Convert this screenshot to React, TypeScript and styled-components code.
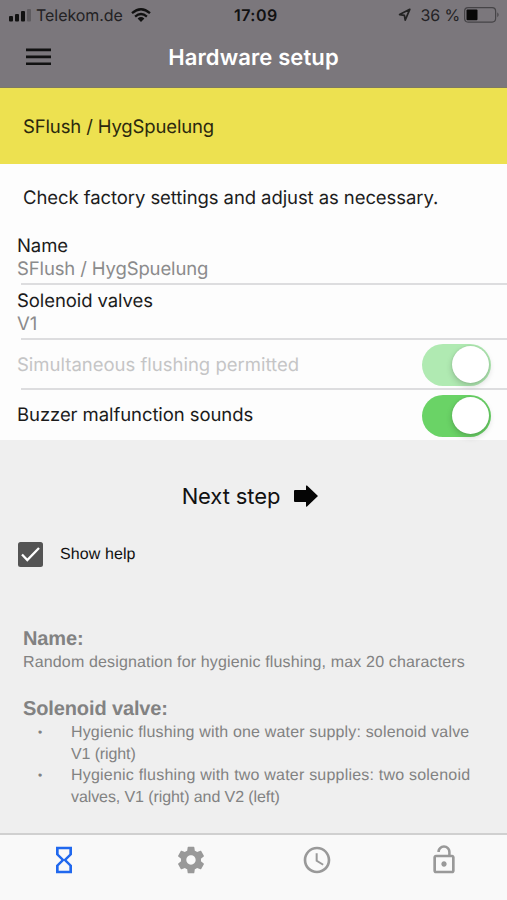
import React from "react";
import styled, { createGlobalStyle } from "styled-components";

const GlobalStyle = createGlobalStyle`
  * { box-sizing: border-box; }
  body { margin: 0; background: #efefef; text-rendering: geometricPrecision; }
  h1, h2, p, ul { margin: 0; padding: 0; }
`;

const Screen = styled.div`
  display: flex;
  flex-direction: column;
  width: 507px;
  height: 900px;
  overflow: hidden;
  background: #efefef;
  font-family: Inter, "Liberation Sans", sans-serif;
  color: #1c1c1c;
  white-space: nowrap;
`;

const Header = styled.header`
  flex: none;
  height: 88px;
  background: #7b777c;
  border-bottom: 1px solid #7d7963;
`;

const StatusBar = styled.div`
  display: grid;
  grid-template-columns: 225px 1fr auto;
  align-items: center;
  height: 30px;
  padding: 0 7px 0 9px;
  font-size: 16px;
  color: #232224;
`;

const StatusGroup = styled.div<{ $end?: boolean }>`
  display: flex;
  align-items: center;
  justify-content: ${(p) => (p.$end ? "flex-end" : "flex-start")};
`;

const Carrier = styled.span`
  margin: 0 8px 0 4px;
  font-size: 16px;
  letter-spacing: -0.05px;
`;

const Clock = styled.span`
  font-size: 16px;
  font-weight: 600;
  letter-spacing: 0.45px;
  color: #111;
`;

const Charge = styled.span`
  margin: 0 4px 0 9px;
  letter-spacing: -0.1px;
`;

const TitleBar = styled.div`
  display: grid;
  grid-template-columns: 64px 1fr 64px;
  align-items: center;
  height: 55px;
`;

const MenuButton = styled.button`
  display: flex;
  padding: 0 0 1px 26px;
  border: 0;
  background: none;
`;

const Title = styled.h1`
  padding-top: 1px;
  text-align: center;
  font-size: 22px;
  line-height: 28px;
  font-weight: 600;
  letter-spacing: 0.12px;
  color: #fff;
`;

const Banner = styled.div`
  flex: none;
  display: flex;
  align-items: center;
  height: 76px;
  padding: 1px 0 0 23px;
  background: #ede150;
  font-size: 18.5px;
  letter-spacing: -0.14px;
  color: #2b280e;
`;

const Settings = styled.section`
  flex: none;
  height: 276px;
  background: #fdfdfd;
`;

const Intro = styled.p`
  height: 68px;
  padding: 22px 0 0 23px;
  font-size: 18.5px;
  line-height: 24px;
  letter-spacing: -0.08px;
`;

const Row = styled.div<{ $height: number; $last?: boolean }>`
  display: flex;
  align-items: center;
  justify-content: space-between;
  height: ${(p) => p.$height}px;
  padding: 0 16px 0 17px;
  background: ${(p) =>
    p.$last ? "none" : "linear-gradient(#dddddf, #dddddf) 21px 100% / 100% 2px no-repeat"};
`;

const Field = styled.div<{ $raise?: number }>`
  display: flex;
  flex-direction: column;
  padding-bottom: ${(p) => p.$raise ?? 0}px;
`;

const Label = styled.span<{ $disabled?: boolean }>`
  font-size: 18.5px;
  line-height: 23px;
  letter-spacing: ${(p) => (p.$disabled ? 0 : -0.08)}px;
  color: ${(p) => (p.$disabled ? "#c5c5c6" : "#1b1b1b")};
`;

const Value = styled.span`
  font-size: 18.5px;
  line-height: 23px;
  letter-spacing: -0.13px;
  color: #8b8b8c;
`;

const Toggle = styled.button<{ $disabled?: boolean }>`
  display: flex;
  justify-content: flex-end;
  width: 69px;
  height: 42px;
  padding: 2px 2.5px;
  border: 0;
  border-radius: 21px;
  background: ${(p) => (p.$disabled ? "#b0eab2" : "#6ad366")};
`;

const Knob = styled.span`
  width: 37px;
  height: 37px;
  border-radius: 50%;
  background: #fff;
  box-shadow: 0 3px 6px rgba(0, 0, 0, 0.18), 0 0 2px rgba(0, 0, 0, 0.12);
`;

const NextStep = styled.button`
  flex: none;
  display: flex;
  align-items: center;
  justify-content: center;
  gap: 14px;
  height: 44px;
  margin-top: 34px;
  padding: 0 7px 0 0;
  border: 0;
  background: none;
  font: 22px Inter, sans-serif;
  letter-spacing: -0.1px;
  color: #111;
`;

const HelpToggle = styled.label`
  flex: none;
  display: flex;
  align-items: center;
  gap: 17px;
  height: 26px;
  margin: 23px 0 0 18px;
  padding-top: 1px;
  font: 16px "Liberation Sans", sans-serif;
  letter-spacing: 0.1px;
  color: #111;
`;

const HelpText = styled.section`
  flex: 1;
  padding: 59px 0 0 23px;
  font: 16px/22px "Liberation Sans", sans-serif;
  letter-spacing: 0.15px;
  color: #828282;
`;

const HelpHeading = styled.h2`
  font-size: 20px;
  line-height: 26px;
  font-weight: 700;
  letter-spacing: -0.12px;
`;

const HelpLine = styled.p`
  height: 44px;
  line-height: 22px;
`;

const BulletList = styled.ul`
  list-style: none;
  line-height: 21.6px;
`;

const Bullet = styled.li`
  display: grid;
  grid-template-columns: 48px 1fr;

  &::before {
    content: "•";
    padding-left: 15px;
    font-size: 12px;
  }
`;

const BulletLine = styled.span<{ $spacing: number }>`
  display: block;
  letter-spacing: ${(p) => p.$spacing}px;
`;

const TabBar = styled.nav`
  flex: none;
  display: flex;
  height: 67px;
  padding-left: 1px;
  border-top: 2px solid #d0d0d0;
  background: #f9f9f9;
`;

const Tab = styled.button<{ $active?: boolean }>`
  flex: 1;
  display: flex;
  justify-content: center;
  padding: 9px 0 0;
  border: 0;
  background: none;
  color: ${(p) => (p.$active ? "#2068ee" : "#999")};
`;

const tabs = [
  {
    name: "Flushing",
    path: "M6 2v6h.01L6 8.01 10 12l-4 4 .01.01H6V22h12v-5.99h-.01L18 16l-4-4 4-3.99-.01-.01H18V2H6zm10 14.5V20H8v-3.5l4-4 4 4zm-4-5l-4-4V4h8v3.5l-4 4z",
  },
  {
    name: "Settings",
    path: "M19.43 12.98c.04-.32.07-.64.07-.98s-.03-.66-.07-.98l2.11-1.65c.19-.15.24-.42.12-.64l-2-3.46c-.12-.22-.39-.3-.61-.22l-2.49 1c-.52-.4-1.08-.73-1.69-.98l-.38-2.65C14.46 2.18 14.25 2 14 2h-4c-.25 0-.46.18-.49.42l-.38 2.65c-.61.25-1.17.59-1.69.98l-2.49-1c-.23-.09-.49 0-.61.22l-2 3.46c-.13.22-.07.49.12.64l2.11 1.65c-.04.32-.07.65-.07.98s.03.66.07.98l-2.11 1.65c-.19.15-.24.42-.12.64l2 3.46c.12.22.39.3.61.22l2.49-1c.52.4 1.08.73 1.69.98l.38 2.65c.03.24.24.42.49.42h4c.25 0 .46-.18.49-.42l.38-2.65c.61-.25 1.17-.59 1.69-.98l2.49 1c.23.09.49 0 .61-.22l2-3.46c.12-.22.07-.49-.12-.64l-2.11-1.65zM12 15.5c-1.93 0-3.5-1.57-3.5-3.5s1.57-3.5 3.5-3.5 3.5 1.57 3.5 3.5-1.57 3.5-3.5 3.5z",
  },
  {
    name: "Schedule",
    path: "M11.99 2C6.47 2 2 6.48 2 12s4.47 10 9.99 10C17.52 22 22 17.52 22 12S17.52 2 11.99 2zM12 20c-4.42 0-8-3.58-8-8s3.58-8 8-8 8 3.58 8 8-3.58 8-8 8zm.5-13H11v6l5.25 3.15.75-1.23-4.5-2.67z",
  },
  {
    name: "Access",
    path: "M12 17c1.1 0 2-.9 2-2s-.9-2-2-2-2 .9-2 2 .9 2 2 2zm6-9h-1V6c0-2.76-2.24-5-5-5S7 3.24 7 6h1.9c0-1.71 1.39-3.1 3.1-3.1 1.71 0 3.1 1.39 3.1 3.1v2H6c-1.1 0-2 .9-2 2v10c0 1.1.9 2 2 2h12c1.1 0 2-.9 2-2V10c0-1.1-.9-2-2-2zm0 12H6V10h12v10z",
  },
];

const SignalIcon = () => (
  <svg width="23" height="14" viewBox="0 0 23 14" fill="#111">
    <rect y="8" width="4" height="5.5" rx="1" />
    <rect x="6" y="6" width="4" height="7.5" rx="1" />
    <rect x="12" y="3" width="4" height="10.5" rx="1" />
    <rect x="18" y="1" width="4" height="12.5" rx="1" fill="#5e5b5f" />
  </svg>
);

const WifiIcon = () => (
  <svg width="20" height="14" viewBox="0 0 20 14" fill="none" stroke="#111" strokeWidth="2.3">
    <path d="M1 5.2Q10-2.8 19 5.2" />
    <path d="M4.1 8.6Q10 3.5 15.9 8.6" />
    <path d="M10 14 6.6 10.5Q10 7.6 13.4 10.5Z" fill="#111" stroke="none" />
  </svg>
);

const LocationIcon = () => (
  <svg width="14" height="14" viewBox="0 0 14 14" fill="none" stroke="#222" strokeWidth="1.7" strokeLinejoin="round">
    <path d="M12.8 1.3 2.6 6.6 7.4 7.3 8.2 12.2Z" />
  </svg>
);

const BatteryIcon = () => (
  <svg width="36" height="16" viewBox="0 0 36 16">
    <rect x=".6" y=".6" width="31" height="14.5" rx="3.5" fill="none" stroke="#464447" strokeWidth="1.2" />
    <rect x="2.5" y="2.5" width="11" height="10.8" rx="1" fill="#080808" />
    <path d="M33.3 5.3Q36 7.8 33.3 10.3Z" fill="#464447" />
  </svg>
);

export default function App() {
  return (
    <>
      <GlobalStyle />
      <Screen>
        <Header>
          <StatusBar>
            <StatusGroup>
              <SignalIcon />
              <Carrier>Telekom.de</Carrier>
              <WifiIcon />
            </StatusGroup>
            <Clock>17:09</Clock>
            <StatusGroup $end>
              <LocationIcon />
              <Charge>36 %</Charge>
              <BatteryIcon />
            </StatusGroup>
          </StatusBar>
          <TitleBar>
            <MenuButton aria-label="Menu">
              <svg width="25" height="18" viewBox="0 0 25 18" fill="#111">
                <path d="M0 .5h25v2.7H0zM0 7.5h25v2.7H0zM0 14.4h25v2.7H0z" />
              </svg>
            </MenuButton>
            <Title>Hardware setup</Title>
          </TitleBar>
        </Header>
        <Banner>SFlush / HygSpuelung</Banner>
        <Settings>
          <Intro>Check factory settings and adjust as necessary.</Intro>
          <Row $height={53}>
            <Field $raise={1}>
              <Label>Name</Label>
              <Value>SFlush / HygSpuelung</Value>
            </Field>
          </Row>
          <Row $height={55}>
            <Field>
              <Label>Solenoid valves</Label>
              <Value>V1</Value>
            </Field>
          </Row>
          <Row $height={50}>
            <Label $disabled>Simultaneous flushing permitted</Label>
            <Toggle $disabled aria-label="Simultaneous flushing permitted"><Knob /></Toggle>
          </Row>
          <Row $height={51} $last>
            <Label>Buzzer malfunction sounds</Label>
            <Toggle aria-label="Buzzer malfunction sounds"><Knob /></Toggle>
          </Row>
        </Settings>
        <NextStep>
          Next step
          <svg width="24" height="22" viewBox="0 0 24 22">
            <path d="M1 5h11V1q0-1 1-.4L24 11 13 21.4q-1 .6-1-.4v-4H1q-1 0-1-1V6q0-1 1-1Z" fill="#050505" />
          </svg>
        </NextStep>
        <HelpToggle>
          <svg width="25" height="25" viewBox="0 0 25 25">
            <rect width="25" height="25" rx="2.5" fill="#545454" />
            <path d="M4 12.5 9.3 18 21 6" fill="none" stroke="#fff" strokeWidth="2.3" />
          </svg>
          Show help
        </HelpToggle>
        <HelpText>
          <HelpHeading>Name:</HelpHeading>
          <HelpLine>Random designation for hygienic flushing, max 20 characters</HelpLine>
          <HelpHeading>Solenoid valve:</HelpHeading>
          <BulletList>
            <Bullet>
              <div>
                <BulletLine $spacing={0.16}>Hygienic flushing with one water supply: solenoid valve</BulletLine>
                <BulletLine $spacing={-0.12}>V1 (right)</BulletLine>
              </div>
            </Bullet>
            <Bullet>
              <div>
                <BulletLine $spacing={0.21}>Hygienic flushing with two water supplies: two solenoid</BulletLine>
                <BulletLine $spacing={-0.09}>valves, V1 (right) and V2 (left)</BulletLine>
              </div>
            </Bullet>
          </BulletList>
        </HelpText>
        <TabBar>
          {tabs.map((tab, index) => (
            <Tab key={tab.name} $active={index === 0} aria-label={tab.name}>
              <svg width="32" height="32" viewBox="0 0 24 24" fill="currentColor">
                <path d={tab.path} />
              </svg>
            </Tab>
          ))}
        </TabBar>
      </Screen>
    </>
  );
}
